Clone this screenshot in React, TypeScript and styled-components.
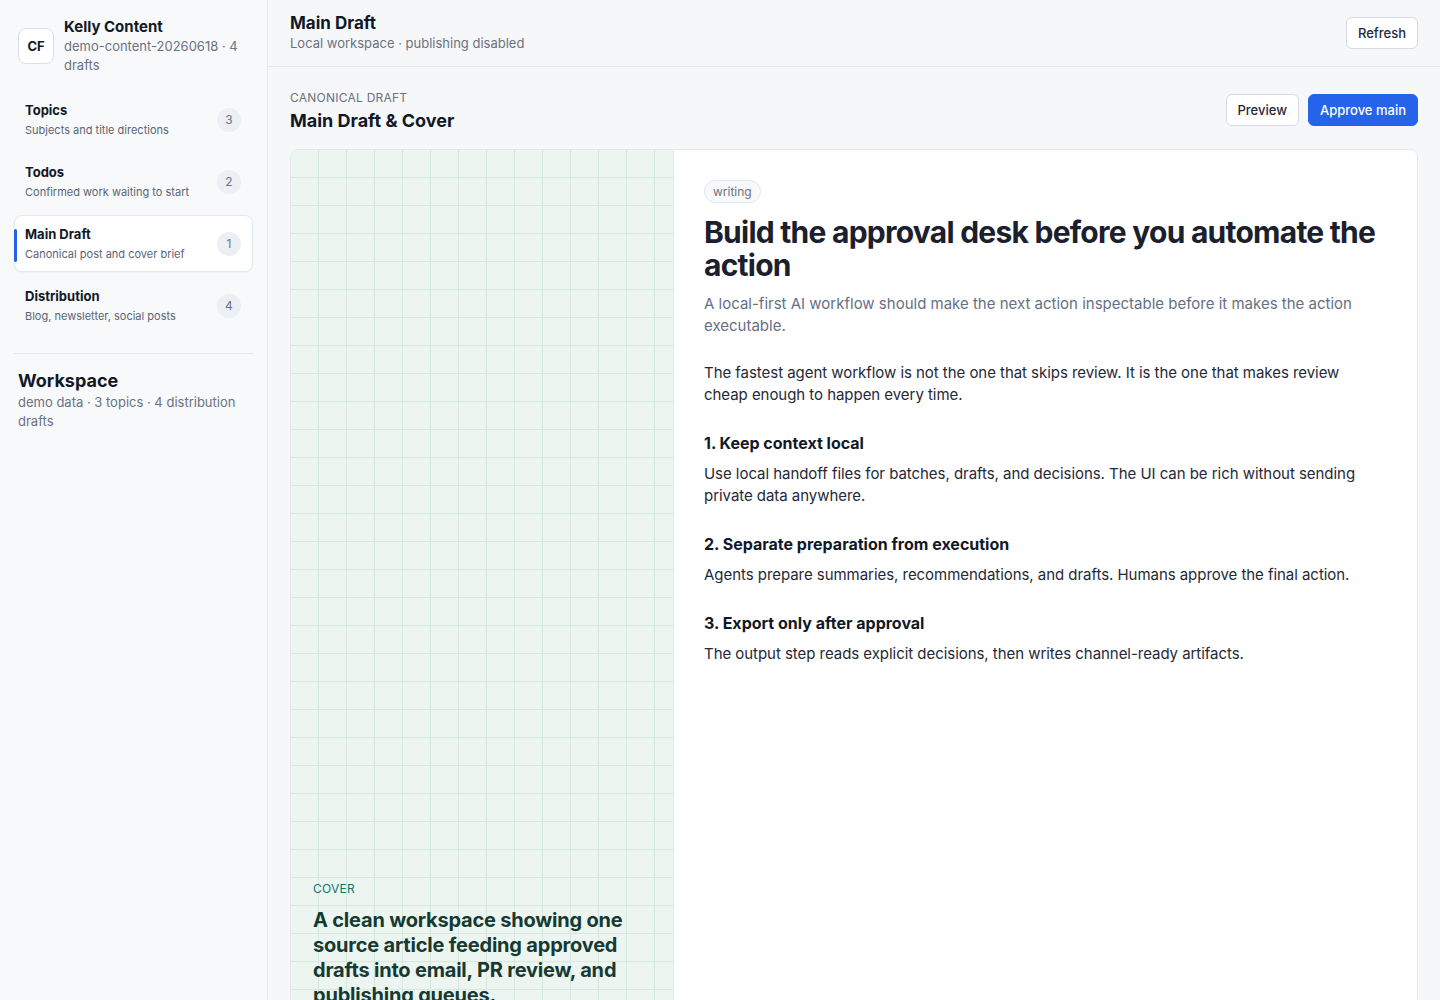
import React from "react";
import styled, { createGlobalStyle } from "styled-components";

const GlobalStyle = createGlobalStyle`
  html, body {
    margin: 0;
    padding: 0;
    background: #f6f7f9;
    font-family: Inter, "Noto Sans", "Liberation Sans", sans-serif;
    color: #1f2937;
    -webkit-font-smoothing: antialiased;
  }
  * { box-sizing: border-box; }
`;

const Shell = styled.div`
  display: grid;
  grid-template-columns: 268px 1fr;
  min-height: 1000px;
  height: 1000px;
  overflow: hidden;
`;

const Sidebar = styled.aside`
  background: #f8f9fb;
  border-right: 1px solid #e5e7eb;
  padding: 16px 14px;
`;

const Brand = styled.div`
  display: flex;
  align-items: flex-start;
  gap: 10px;
  padding: 0 4px;
  margin-bottom: 16px;
`;

const Avatar = styled.div`
  width: 36px;
  height: 36px;
  flex: none;
  margin-top: 12px;
  border: 1px solid #d9dee6;
  border-radius: 8px;
  background: #fff;
  display: flex;
  align-items: center;
  justify-content: center;
  font-size: 13px;
  font-weight: 700;
  color: #111827;
`;

const BrandName = styled.div`
  font-size: 15px;
  font-weight: 700;
  color: #111827;
  line-height: 20px;
  margin-top: 1px;
`;

const Muted = styled.div<{ $size?: number }>`
  font-size: ${(p) => p.$size ?? 13}px;
  line-height: 19px;
  color: #6b7280;
`;

const Nav = styled.nav`
  display: flex;
  flex-direction: column;
  gap: 5px;
`;

const NavItem = styled.div<{ $active?: boolean }>`
  position: relative;
  display: flex;
  align-items: center;
  justify-content: space-between;
  height: 57px;
  padding: 0 10px;
  border-radius: 8px;
  border: 1px solid ${(p) => (p.$active ? "#e3e7ee" : "transparent")};
  background: ${(p) => (p.$active ? "#ffffff" : "transparent")};
  box-shadow: ${(p) => (p.$active ? "0 1px 2px rgba(15,23,42,0.04)" : "none")};

  &::before {
    content: "";
    display: ${(p) => (p.$active ? "block" : "none")};
    position: absolute;
    left: -1px;
    top: 13px;
    bottom: 9px;
    width: 3px;
    border-radius: 2px;
    background: #2563eb;
  }
`;

const NavTitle = styled.div`
  font-size: 13px;
  font-weight: 700;
  color: #111827;
  line-height: 18px;
`;

const NavSub = styled.div`
  font-size: 11px;
  color: #5b6474;
  line-height: 16px;
  margin-top: 3px;
`;

const Badge = styled.span`
  width: 24px;
  height: 24px;
  margin-right: 1px;
  border-radius: 50%;
  background: #eceff3;
  color: #6b7280;
  font-size: 12px;
  display: flex;
  align-items: center;
  justify-content: center;
`;

const Divider = styled.hr`
  border: none;
  border-top: 1px solid #e3e6eb;
  margin: 19px 0 15px;
`;

const WorkspaceBlock = styled.div`
  padding: 0 4px;
`;

const WorkspaceTitle = styled.div`
  font-size: 18px;
  font-weight: 700;
  color: #111827;
  line-height: 24px;
`;

const Main = styled.main`
  display: flex;
  flex-direction: column;
  min-width: 0;
`;

const Header = styled.header`
  height: 67px;
  border-bottom: 1px solid #e5e7eb;
  display: flex;
  align-items: center;
  justify-content: space-between;
  padding: 0 22px;
`;

const HeaderTitle = styled.div`
  font-size: 17px;
  font-weight: 700;
  color: #111827;
  line-height: 22px;
  margin-top: -1px;
`;

const Button = styled.button<{ $primary?: boolean }>`
  height: 32px;
  padding: 0 11px;
  border-radius: 6px;
  font-family: inherit;
  font-size: 13px;
  font-weight: 500;
  border: 1px solid ${(p) => (p.$primary ? "#2563eb" : "#d5dae3")};
  background: ${(p) => (p.$primary ? "#2563eb" : "#ffffff")};
  color: ${(p) => (p.$primary ? "#ffffff" : "#1f2937")};
  cursor: pointer;
`;

const Content = styled.section`
  padding: 23px 22px 0;
  display: flex;
  flex-direction: column;
  gap: 16px;
`;

const SectionHead = styled.div`
  display: flex;
  justify-content: space-between;
  align-items: flex-start;
`;

const Eyebrow = styled.div<{ $color?: string }>`
  font-size: 12px;
  letter-spacing: 0.02em;
  text-transform: uppercase;
  color: ${(p) => p.$color ?? "#6b7280"};
  line-height: 16px;
`;

const SectionTitle = styled.div`
  font-size: 18px;
  font-weight: 700;
  color: #111827;
  line-height: 24px;
  margin-top: 3px;
`;

const Actions = styled.div`
  display: flex;
  gap: 9px;
  margin-top: 4px;
`;

const Card = styled.div`
  display: grid;
  grid-template-columns: 383px 1fr;
  background: #fff;
  border: 1px solid #e5e7eb;
  border-radius: 8px;
  overflow: hidden;
`;

const Cover = styled.div`
  height: 880px;
  background-color: #edf5f1;
  background-image: linear-gradient(to right, #d6e7df 1px, transparent 1px),
    linear-gradient(to bottom, #d6e7df 1px, transparent 1px);
  background-size: 28px 28px;
  background-position: 27px 27px;
  border-right: 1px solid #e5e7eb;
  display: flex;
  flex-direction: column;
  justify-content: flex-end;
  padding: 0 22px 22px;
`;

const CoverTitle = styled.div`
  font-size: 20px;
  font-weight: 700;
  line-height: 25px;
  color: #163a31;
  margin-top: 11px;
  letter-spacing: -0.01em;
`;

const Article = styled.article`
  padding: 30px 30px 40px;
`;

const Tag = styled.span`
  display: inline-flex;
  align-items: center;
  height: 23px;
  padding: 0 8px;
  border: 1px solid #e3e6eb;
  border-radius: 999px;
  background: #f8f9fb;
  color: #6b7280;
  font-size: 12px;
`;

const Headline = styled.h1`
  margin: 13px 0 0;
  font-size: 30px;
  line-height: 33px;
  font-weight: 700;
  color: #1a202c;
  letter-spacing: -0.025em;
`;

const Lede = styled.p`
  margin: 11px 0 0;
  font-size: 15px;
  line-height: 22px;
  color: #667085;
`;

const Para = styled.p<{ $gap?: number }>`
  margin: ${(p) => p.$gap ?? 9}px 0 0;
  font-size: 15px;
  line-height: 22px;
  color: #1f2937;
  letter-spacing: -0.003em;
`;

const SubHead = styled.h3`
  margin: 26px 0 0;
  font-size: 16px;
  line-height: 22px;
  font-weight: 700;
  color: #111827;
`;

const navItems = [
  { title: "Topics", sub: "Subjects and title directions", count: 3 },
  { title: "Todos", sub: "Confirmed work waiting to start", count: 2 },
  { title: "Main Draft", sub: "Canonical post and cover brief", count: 1, active: true },
  { title: "Distribution", sub: "Blog, newsletter, social posts", count: 4 },
];

const sections = [
  {
    title: "1. Keep context local",
    body: "Use local handoff files for batches, drafts, and decisions. The UI can be rich without sending private data anywhere.",
  },
  {
    title: "2. Separate preparation from execution",
    body: "Agents prepare summaries, recommendations, and drafts. Humans approve the final action.",
  },
  {
    title: "3. Export only after approval",
    body: "The output step reads explicit decisions, then writes channel-ready artifacts.",
  },
];

export default function App() {
  return (
    <>
      <GlobalStyle />
      <Shell>
        <Sidebar>
          <Brand>
            <Avatar>CF</Avatar>
            <div>
              <BrandName>Kelly Content</BrandName>
              <Muted>demo-content-20260618 · 4 drafts</Muted>
            </div>
          </Brand>
          <Nav>
            {navItems.map((item) => (
              <NavItem key={item.title} $active={item.active}>
                <div>
                  <NavTitle>{item.title}</NavTitle>
                  <NavSub>{item.sub}</NavSub>
                </div>
                <Badge>{item.count}</Badge>
              </NavItem>
            ))}
          </Nav>
          <Divider />
          <WorkspaceBlock>
            <WorkspaceTitle>Workspace</WorkspaceTitle>
            <Muted>demo data · 3 topics · 4 distribution drafts</Muted>
          </WorkspaceBlock>
        </Sidebar>

        <Main>
          <Header>
            <div>
              <HeaderTitle>Main Draft</HeaderTitle>
              <Muted>Local workspace · publishing disabled</Muted>
            </div>
            <Button>Refresh</Button>
          </Header>

          <Content>
            <SectionHead>
              <div>
                <Eyebrow>Canonical draft</Eyebrow>
                <SectionTitle>Main Draft &amp; Cover</SectionTitle>
              </div>
              <Actions>
                <Button>Preview</Button>
                <Button $primary>Approve main</Button>
              </Actions>
            </SectionHead>

            <Card>
              <Cover>
                <Eyebrow $color="#0f766e">Cover</Eyebrow>
                <CoverTitle>
                  A clean workspace showing one source article feeding approved
                  drafts into email, PR review, and publishing queues.
                </CoverTitle>
              </Cover>
              <Article>
                <Tag>writing</Tag>
                <Headline>Build the approval desk before you automate the action</Headline>
                <Lede>
                  A local-first AI workflow should make the next action inspectable
                  before it makes the action executable.
                </Lede>
                <Para $gap={25}>
                  The fastest agent workflow is not the one that skips review. It is
                  the one that makes review cheap enough to happen every time.
                </Para>
                {sections.map((s) => (
                  <React.Fragment key={s.title}>
                    <SubHead>{s.title}</SubHead>
                    <Para>{s.body}</Para>
                  </React.Fragment>
                ))}
              </Article>
            </Card>
          </Content>
        </Main>
      </Shell>
    </>
  );
}
